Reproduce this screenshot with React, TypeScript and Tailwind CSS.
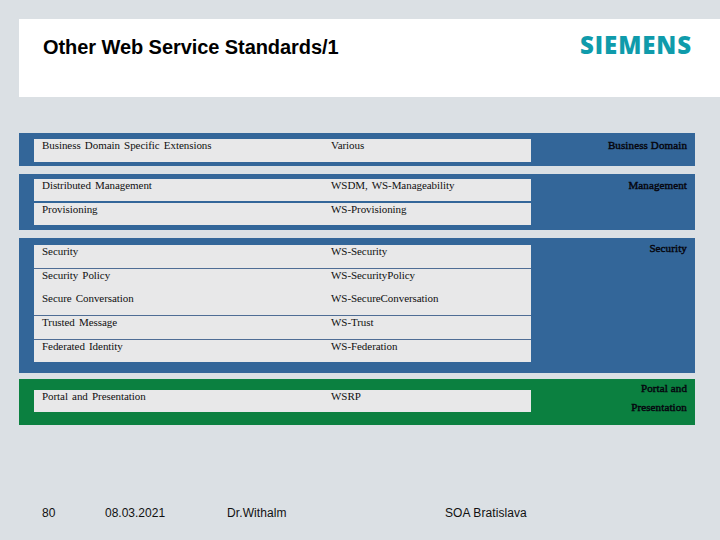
const serif = "font-['Liberation_Serif',serif]";

type RowT = { a: string; b: string; h: string; line?: boolean };

function Row({ a, b, h, line }: RowT) {
  return (
    <div className={`flex bg-[#e8e8e9] pl-2 ${h} ${line ? "border-b border-[#4f6d95]" : ""}`}>
      <div className={`w-[289px] ${serif} text-[11px] leading-[13px] tracking-[-0.06px] [word-spacing:1.5px] text-[#101010]`}>{a}</div>
      <div className={`${serif} text-[11px] leading-[13px] tracking-[-0.06px] [word-spacing:1.5px] text-[#101010]`}>{b}</div>
    </div>
  );
}

function Block({ color, h, pt, gap, label, rows }: { color: string; h: string; pt: string; gap?: string; label: React.ReactNode; rows: RowT[] }) {
  return (
    <div className={`ml-[19px] w-[676px] flex ${color} ${h} ${pt}`}>
      <div className={`ml-[15px] w-[497px] flex flex-col ${gap ?? ""}`}>
        {rows.map((r) => (
          <Row key={r.a} {...r} />
        ))}
      </div>
      <div className={`flex-1 pr-[8px] text-right ${serif} text-[11px] tracking-[0.12px] [-webkit-text-stroke:0.45px_#06060f] text-[#06060f]`}>{label}</div>
    </div>
  );
}

export default function App() {
  return (
    <div className="w-[720px] h-[540px] overflow-hidden bg-[#dbe0e4] flex flex-col font-['Liberation_Sans',sans-serif]">
      <header className="mt-[19px] ml-[19px] h-[78px] bg-white flex items-start justify-between shrink-0">
        <h1 className="ml-[24px] mt-[18px] text-[20px] leading-[20px] font-bold tracking-[-0.07px] text-black">Other Web Service Standards/1</h1>
        <div className="mr-[28px] mt-[12px] font-['Open_Sans',sans-serif] font-extrabold text-[24px] leading-[28px] tracking-[0.9px] text-[#0f9bab]">SIEMENS</div>
      </header>

      <div className="mt-[36px] flex flex-col">
        <Block
          color="bg-[#336699]"
          h="h-[33px]"
          pt="pt-[6px]"
          label={<div className="leading-[13px]">Business Domain</div>}
          rows={[{ a: "Business Domain Specific Extensions", b: "Various", h: "h-[23px]" }]}
        />
        <div className="h-[8px]" />
        <Block
          color="bg-[#336699]"
          h="h-[56px]"
          pt="pt-[5px]"
          gap="gap-[2px]"
          label={<div className="leading-[13px]">Management</div>}
          rows={[
            { a: "Distributed Management", b: "WSDM, WS-Manageability", h: "h-[22px]" },
            { a: "Provisioning", b: "WS-Provisioning", h: "h-[22px]" },
          ]}
        />
        <div className="h-[8px]" />
        <Block
          color="bg-[#336699]"
          h="h-[135px]"
          pt="pt-[7px]"
          label={<div className="leading-[13px] -mt-[3px]">Security</div>}
          rows={[
            { a: "Security", b: "WS-Security", h: "h-[24px]", line: true },
            { a: "Security Policy", b: "WS-SecurityPolicy", h: "h-[23px]" },
            { a: "Secure Conversation", b: "WS-SecureConversation", h: "h-[24px]", line: true },
            { a: "Trusted Message", b: "WS-Trust", h: "h-[24px]", line: true },
            { a: "Federated Identity", b: "WS-Federation", h: "h-[22px]" },
          ]}
        />
        <div className="h-[6px]" />
        <Block
          color="bg-[#0b8040]"
          h="h-[46px]"
          pt="pt-[11px]"
          label={
            <div className="leading-[19px] -mt-[11px]">
              Portal and
              <br />
              Presentation
            </div>
          }
          rows={[{ a: "Portal and Presentation", b: "WSRP", h: "h-[22px]" }]}
        />
      </div>

      <footer className="mt-[81px] ml-[42px] flex text-[12px] leading-[14px] text-[#111111]">
        <div className="w-[63px]">80</div>
        <div className="w-[122px]">08.03.2021</div>
        <div className="w-[218px] tracking-[0.1px]">Dr.Withalm</div>
        <div className="tracking-[0.08px]">SOA Bratislava</div>
      </footer>
    </div>
  );
}
